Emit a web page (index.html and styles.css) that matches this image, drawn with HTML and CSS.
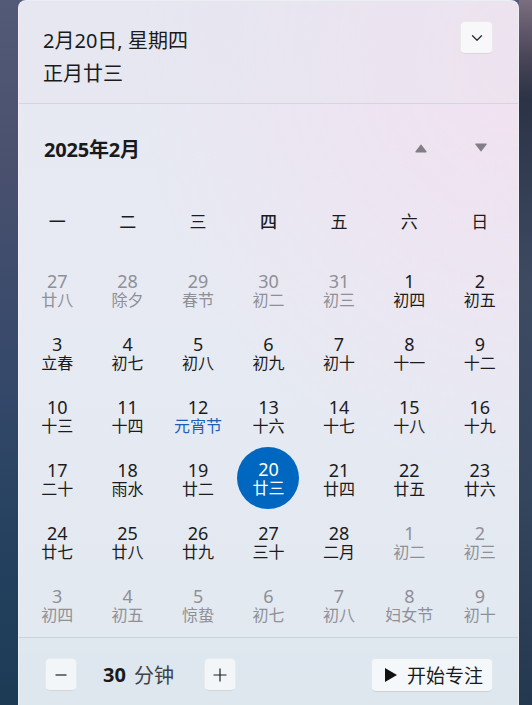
FILE: index.html
```html
<!DOCTYPE html>
<html lang="zh-CN">
<head>
<meta charset="utf-8">
<title>日历</title>
<link rel="stylesheet" href="styles.css">
</head>
<body>
<div class="panel">
  <header class="head">
    <div class="head-text">
      <div class="head-line">2月20日, 星期四</div>
      <div class="head-line">正月廿三</div>
    </div>
    <button class="collapse" aria-label="折叠">
      <svg width="12" height="8" viewBox="0 0 12 8"><path d="M1.5 1.8 L6 6.2 L10.5 1.8" fill="none" stroke="#2b2b2b" stroke-width="1.3" stroke-linecap="round" stroke-linejoin="round"/></svg>
    </button>
  </header>

  <section class="cal">
    <div class="cal-title">
      <div class="month">2025年2月</div>
      <div class="nav">
        <button class="nav-btn" aria-label="上个月"><svg width="14" height="10" viewBox="0 0 14 10"><path d="M7 1.2 L12.6 8.6 Q13 9.4 12 9.4 L2 9.4 Q1 9.4 1.4 8.6 Z" fill="#7f7f85"/></svg></button>
        <button class="nav-btn" aria-label="下个月"><svg width="14" height="10" viewBox="0 0 14 10"><path d="M7 8.8 L12.6 1.4 Q13 0.6 12 0.6 L2 0.6 Q1 0.6 1.4 1.4 Z" fill="#7f7f85"/></svg></button>
      </div>
    </div>

    <div class="weekdays">
      <div class="wd">一</div>
      <div class="wd">二</div>
      <div class="wd">三</div>
      <div class="wd wd-today">四</div>
      <div class="wd">五</div>
      <div class="wd">六</div>
      <div class="wd">日</div>
    </div>

    <div class="grid">
      <div class="cell"><div class="day dim"><span class="num">27</span><span class="lunar">廿八</span></div></div>
      <div class="cell"><div class="day dim"><span class="num">28</span><span class="lunar">除夕</span></div></div>
      <div class="cell"><div class="day dim"><span class="num">29</span><span class="lunar">春节</span></div></div>
      <div class="cell"><div class="day dim"><span class="num">30</span><span class="lunar">初二</span></div></div>
      <div class="cell"><div class="day dim"><span class="num">31</span><span class="lunar">初三</span></div></div>
      <div class="cell"><div class="day"><span class="num">1</span><span class="lunar">初四</span></div></div>
      <div class="cell"><div class="day"><span class="num">2</span><span class="lunar">初五</span></div></div>

      <div class="cell"><div class="day"><span class="num">3</span><span class="lunar">立春</span></div></div>
      <div class="cell"><div class="day"><span class="num">4</span><span class="lunar">初七</span></div></div>
      <div class="cell"><div class="day"><span class="num">5</span><span class="lunar">初八</span></div></div>
      <div class="cell"><div class="day"><span class="num">6</span><span class="lunar">初九</span></div></div>
      <div class="cell"><div class="day"><span class="num">7</span><span class="lunar">初十</span></div></div>
      <div class="cell"><div class="day"><span class="num">8</span><span class="lunar">十一</span></div></div>
      <div class="cell"><div class="day"><span class="num">9</span><span class="lunar">十二</span></div></div>

      <div class="cell"><div class="day"><span class="num">10</span><span class="lunar">十三</span></div></div>
      <div class="cell"><div class="day"><span class="num">11</span><span class="lunar">十四</span></div></div>
      <div class="cell"><div class="day"><span class="num">12</span><span class="lunar festival">元宵节</span></div></div>
      <div class="cell"><div class="day"><span class="num">13</span><span class="lunar">十六</span></div></div>
      <div class="cell"><div class="day"><span class="num">14</span><span class="lunar">十七</span></div></div>
      <div class="cell"><div class="day"><span class="num">15</span><span class="lunar">十八</span></div></div>
      <div class="cell"><div class="day"><span class="num">16</span><span class="lunar">十九</span></div></div>

      <div class="cell"><div class="day"><span class="num">17</span><span class="lunar">二十</span></div></div>
      <div class="cell"><div class="day"><span class="num">18</span><span class="lunar">雨水</span></div></div>
      <div class="cell"><div class="day"><span class="num">19</span><span class="lunar">廿二</span></div></div>
      <div class="cell"><div class="day selected"><span class="num">20</span><span class="lunar">廿三</span></div></div>
      <div class="cell"><div class="day"><span class="num">21</span><span class="lunar">廿四</span></div></div>
      <div class="cell"><div class="day"><span class="num">22</span><span class="lunar">廿五</span></div></div>
      <div class="cell"><div class="day"><span class="num">23</span><span class="lunar">廿六</span></div></div>

      <div class="cell"><div class="day"><span class="num">24</span><span class="lunar">廿七</span></div></div>
      <div class="cell"><div class="day"><span class="num">25</span><span class="lunar">廿八</span></div></div>
      <div class="cell"><div class="day"><span class="num">26</span><span class="lunar">廿九</span></div></div>
      <div class="cell"><div class="day"><span class="num">27</span><span class="lunar">三十</span></div></div>
      <div class="cell"><div class="day"><span class="num">28</span><span class="lunar">二月</span></div></div>
      <div class="cell"><div class="day dim"><span class="num">1</span><span class="lunar">初二</span></div></div>
      <div class="cell"><div class="day dim"><span class="num">2</span><span class="lunar">初三</span></div></div>

      <div class="cell"><div class="day dim"><span class="num">3</span><span class="lunar">初四</span></div></div>
      <div class="cell"><div class="day dim"><span class="num">4</span><span class="lunar">初五</span></div></div>
      <div class="cell"><div class="day dim"><span class="num">5</span><span class="lunar">惊蛰</span></div></div>
      <div class="cell"><div class="day dim"><span class="num">6</span><span class="lunar">初七</span></div></div>
      <div class="cell"><div class="day dim"><span class="num">7</span><span class="lunar">初八</span></div></div>
      <div class="cell"><div class="day dim"><span class="num">8</span><span class="lunar">妇女节</span></div></div>
      <div class="cell"><div class="day dim"><span class="num">9</span><span class="lunar">初十</span></div></div>
    </div>
  </section>

  <footer class="foot">
    <button class="sq-btn" aria-label="减少">
      <svg width="14" height="14" viewBox="0 0 14 14"><path d="M1.5 7 H12.5" stroke="#1f1f1f" stroke-width="1.2"/></svg>
    </button>
    <div class="duration"><b class="dur-num">30</b><span class="dur-unit">分钟</span></div>
    <button class="sq-btn" aria-label="增加">
      <svg width="16" height="16" viewBox="0 0 16 16"><path d="M1.5 8 H14.5 M8 1.5 V14.5" stroke="#1f1f1f" stroke-width="1.2"/></svg>
    </button>
    <button class="start">
      <svg width="14" height="16" viewBox="0 0 14 16"><path d="M1 1 L13 8 L1 15 Z" fill="#111"/></svg>
      <span>开始专注</span>
    </button>
  </footer>
</div>
</body>
</html>
```

FILE: styles.css
```css
* { box-sizing: border-box; }

html, body {
  margin: 0;
  height: 705px;
  overflow: hidden;
}

body {
  font-family: "Noto Sans", "Noto Sans CJK SC", sans-serif;
  color: #1a1a1a;
  background:
    linear-gradient(180deg, #7a6e80 0%, #4a4658 8%, #2b3346 14%, #3d4a62 40%, #34455e 70%, #24384f 100%) right top / 13px 100% no-repeat,
    linear-gradient(90deg, transparent 73px, #d8b850 73px, #d8b850 135px, transparent 135px) left top / 100% 2px no-repeat,
    linear-gradient(180deg, #525a78 0%, #48506e 25%, #34486a 55%, #23405e 80%, #1d3a55 100%);
}

button {
  font-family: inherit;
  cursor: pointer;
}

.panel {
  margin-left: 18px;
  width: 501px;
  height: 720px;
  border-radius: 8px 8px 0 0;
  border: 1px solid rgba(255, 255, 255, 0.35);
  border-bottom: none;
  overflow: hidden;
  background:
    radial-gradient(ellipse 380px 420px at 100% 8%, rgba(243, 225, 240, 0.95), rgba(243, 225, 240, 0) 100%),
    linear-gradient(180deg, #e6e8f2 0%, #e7eaf3 40%, #e3e9f1 85%, #dfe7ee 100%);
}

/* Header */
.head {
  height: 103px;
  display: flex;
  justify-content: space-between;
  align-items: flex-start;
  padding: 20px 25px 0 24px;
  border-bottom: 1px solid #d3d6e0;
  background: rgba(228, 229, 238, 0.35);
}

.head-text {
  padding-top: 3px;
}

.head-line {
  font-size: 20px;
  line-height: 33px;
  color: #1b1b1b;
}

.collapse {
  width: 33px;
  height: 33px;
  padding: 0;
  display: flex;
  align-items: center;
  justify-content: center;
  background: #f8f7fa;
  border: 1px solid #ebe8ee;
  border-bottom-color: #d8d5dc;
  border-radius: 5px;
}

/* Calendar */
.cal {
  padding: 0 3px;
}

.cal-title {
  height: 88px;
  display: flex;
  align-items: center;
  justify-content: space-between;
  padding-left: 22px;
  padding-right: 14px;
}

.month {
  font-size: 20px;
  font-weight: 700;
  color: #1a1a1a;
  letter-spacing: -0.2px;
}

.nav {
  display: flex;
  gap: 20px;
}

.nav-btn {
  width: 40px;
  height: 40px;
  padding: 0;
  border: none;
  background: transparent;
  display: flex;
  align-items: center;
  justify-content: center;
}

.weekdays {
  display: grid;
  grid-template-columns: repeat(7, 1fr);
  height: 67px;
  padding-bottom: 11px;
  align-items: center;
}

.wd {
  text-align: center;
  font-size: 17px;
  color: #1c1c1c;
}

.wd-today {
  font-weight: 500;
}

.grid {
  display: grid;
  grid-template-columns: repeat(7, 1fr);
  grid-auto-rows: 63px;
}

.cell {
  display: flex;
  align-items: center;
  justify-content: center;
}

.day {
  width: 62px;
  height: 62px;
  border-radius: 50%;
  display: flex;
  flex-direction: column;
  align-items: center;
  justify-content: center;
  color: #1b1b1b;
}

.num {
  font-size: 18px;
  line-height: 20px;
}

.lunar {
  font-size: 16px;
  line-height: 19px;
  white-space: nowrap;
}

.dim {
  color: #8e9096;
}

.festival {
  color: #1e5fb3;
}

.selected {
  background: #0067c0;
  color: #ffffff;
  margin-top: -3px;
}

/* Footer */
.foot {
  border-top: 1px solid #c9d3dc;
  display: flex;
  align-items: flex-start;
  padding: 20px 25px 0 26px;
  background: rgba(220, 230, 238, 0.45);
  height: 90px;
}

.sq-btn {
  width: 32px;
  height: 33px;
  padding: 0;
  display: flex;
  align-items: center;
  justify-content: center;
  background: #f3f6f9;
  border: 1px solid #e6ebf0;
  border-bottom-color: #cfd6de;
  border-radius: 5px;
}

.duration {
  height: 33px;
  display: flex;
  align-items: center;
  gap: 8px;
  margin: 0 30px 0 26px;
  font-size: 20px;
}

.dur-num {
  font-weight: 700;
  color: #1a1a1a;
}

.dur-unit {
  color: #3e4146;
}

.start {
  margin-left: auto;
  width: 122px;
  height: 34px;
  display: flex;
  align-items: center;
  gap: 9px;
  padding: 0 0 0 12px;
  background: #f5f8fb;
  border: 1px solid #e3e8ee;
  border-bottom-color: #c8d0d8;
  border-radius: 5px;
  font-size: 19px;
  color: #1a1a1a;
}
```
